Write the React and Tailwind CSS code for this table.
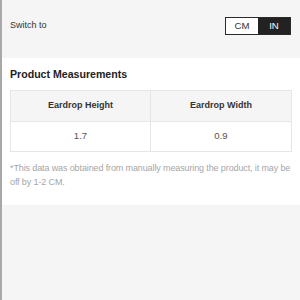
export default function App() {
  const units = ["CM", "IN"];
  const active = "IN";

  return (
    <div className="w-[300px] h-[300px] bg-[#f5f5f5] border-l-2 border-[#a8a8a8] font-['Liberation_Sans',Arial,sans-serif] overflow-hidden">
      {/* Switch */}
      <div className="flex items-center justify-between pl-[8px] pr-[9px] pt-[17px] pb-[23px]">
        <p className="text-[9px] text-[#333]">Switch to</p>
        <div className="flex h-[18px] border border-[#2a2a2a]">
          {units.map((u) => (
            <div
              key={u}
              className={`w-[32px] flex items-center justify-center text-[9.6px] ${
                u === active ? "bg-[#222] text-white" : "bg-white text-[#333]"
              }`}
            >
              {u}
            </div>
          ))}
        </div>
      </div>

      {/* Measurements */}
      <div className="bg-white pl-[8px] pr-[8px] pt-[9px] pb-[16px]">
        <h2 className="text-[10.6px] font-bold text-[#222] leading-[14px]">
          Product Measurements
        </h2>

        <div className="mt-[9px] grid grid-cols-2 border border-[#e6e6e6] text-center">
          <div className="h-[31px] flex items-center justify-center bg-[#f5f5f5] border-r border-b border-[#e6e6e6] text-[9px] font-bold text-[#333]">
            Eardrop Height
          </div>
          <div className="h-[31px] flex items-center justify-center bg-[#f5f5f5] border-b border-[#e6e6e6] text-[9px] font-bold text-[#333]">
            Eardrop Width
          </div>
          <div className="h-[29px] flex items-center justify-center border-r border-[#e6e6e6] text-[9.6px] text-[#555]">
            1.7
          </div>
          <div className="h-[29px] flex items-center justify-center text-[9.6px] text-[#555]">
            0.9
          </div>
        </div>

        <p className="mt-[9px] mr-[-6px] text-[9px] tracking-[-0.12px] leading-[14px] text-[#a6a6a6]">
          *This data was obtained from manually measuring the product, it may be off by 1-2 CM.
        </p>
      </div>
    </div>
  );
}
